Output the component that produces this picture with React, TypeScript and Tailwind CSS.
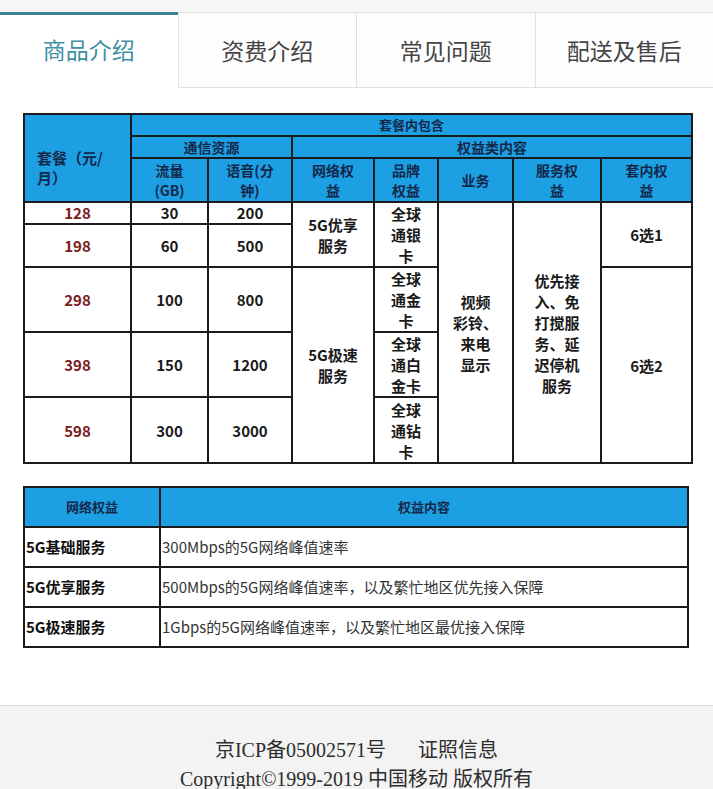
import React from 'react'

const tabs = ['商品介绍', '资费介绍', '常见问题', '配送及售后']

const th = 'bg-[#1d9fe4] border-2 border-[#1b1b1b] text-[#14284a] font-bold text-center align-middle p-0'
const td = 'border-2 border-[#1b1b1b] text-[#1a1a1a] font-bold text-center align-middle p-0'
const price = 'border-2 border-[#1b1b1b] text-[#7a1c1c] font-bold text-center align-middle p-0'

function PlanTable() {
  return (
    <table className="ml-[23px] w-[668px] table-fixed border-collapse border-2 border-[#1b1b1b] text-[15px] leading-[21px]">
      <colgroup>
        <col className="w-[107px]" />
        <col className="w-[77px]" />
        <col className="w-[84px]" />
        <col className="w-[82px]" />
        <col className="w-[64px]" />
        <col className="w-[75px]" />
        <col className="w-[88px]" />
        <col className="w-[91px]" />
      </colgroup>
      <thead className="leading-[20px]">
        <tr className="h-[22px]">
          <th rowSpan={3} className={`${th} !text-left pl-3 pt-5 text-[15px]`}>
            套餐（元/
            <br />
            月）
          </th>
          <th colSpan={7} className={`${th} text-[13px] leading-[18px]`}>套餐内包含</th>
        </tr>
        <tr className="h-[22px]">
          <th colSpan={2} className={`${th} text-[14px] leading-[18px]`}>通信资源</th>
          <th colSpan={5} className={`${th} text-[14px] leading-[18px]`}>权益类内容</th>
        </tr>
        <tr className="h-[44px]">
          <th className={`${th} text-[14px]`}>流量<br />(GB)</th>
          <th className={`${th} text-[14px]`}>语音(分<br />钟)</th>
          <th className={`${th} text-[14px]`}>网络权<br />益</th>
          <th className={`${th} text-[14px]`}>品牌<br />权益</th>
          <th className={`${th} text-[14px]`}>业务</th>
          <th className={`${th} text-[14px]`}>服务权<br />益</th>
          <th className={`${th} text-[14px]`}>套内权<br />益</th>
        </tr>
      </thead>
      <tbody>
        <tr className="h-[22px]">
          <td className={`${price} leading-[18px]`}>128</td>
          <td className={`${td} leading-[18px]`}>30</td>
          <td className={`${td} leading-[18px]`}>200</td>
          <td rowSpan={2} className={td}>5G优享<br />服务</td>
          <td rowSpan={2} className={td}>全球<br />通银<br />卡</td>
          <td rowSpan={5} className={td}>视频<br />彩铃、<br />来电<br />显示</td>
          <td rowSpan={5} className={td}>优先接<br />入、免<br />打搅服<br />务、延<br />迟停机<br />服务</td>
          <td rowSpan={2} className={td}>6选1</td>
        </tr>
        <tr className="h-[42px]">
          <td className={price}>198</td>
          <td className={td}>60</td>
          <td className={td}>500</td>
        </tr>
        <tr className="h-[65px]">
          <td className={price}>298</td>
          <td className={td}>100</td>
          <td className={td}>800</td>
          <td rowSpan={3} className={td}>5G极速<br />服务</td>
          <td className={td}>全球<br />通金<br />卡</td>
          <td rowSpan={3} className={td}>6选2</td>
        </tr>
        <tr className="h-[65px]">
          <td className={price}>398</td>
          <td className={td}>150</td>
          <td className={td}>1200</td>
          <td className={td}>全球<br />通白<br />金卡</td>
        </tr>
        <tr className="h-[66px]">
          <td className={price}>598</td>
          <td className={td}>300</td>
          <td className={td}>3000</td>
          <td className={td}>全球<br />通钻<br />卡</td>
        </tr>
      </tbody>
    </table>
  )
}

const benefits = [
  ['5G基础服务', '300Mbps的5G网络峰值速率'],
  ['5G优享服务', '500Mbps的5G网络峰值速率，以及繁忙地区优先接入保障'],
  ['5G极速服务', '1Gbps的5G网络峰值速率，以及繁忙地区最优接入保障'],
]

function BenefitTable() {
  return (
    <table className="ml-[23px] mt-[22px] w-[666px] table-fixed border-collapse border-2 border-[#1b1b1b] text-[15px]">
      <colgroup>
        <col className="w-[136px]" />
        <col />
      </colgroup>
      <thead>
        <tr className="h-[40px]">
          <th className="border-2 border-[#1b1b1b] bg-[#1d9fe4] text-center align-middle text-[13px] font-bold text-[#14284a]">网络权益</th>
          <th className="border-2 border-[#1b1b1b] bg-[#1d9fe4] text-center align-middle text-[13px] font-bold text-[#14284a]">权益内容</th>
        </tr>
      </thead>
      <tbody>
        {benefits.map(([name, desc]) => (
          <tr key={name} className="h-[40px]">
            <td className="border-2 border-[#1b1b1b] pl-[1px] align-middle font-bold text-[#111]">{name}</td>
            <td className="border-2 border-[#1b1b1b] pl-[1px] align-middle text-[#333]">{desc}</td>
          </tr>
        ))}
      </tbody>
    </table>
  )
}

export default function App() {
  return (
    <div className="w-[713px] min-h-[789px] bg-white font-['Noto_Sans_CJK_SC','Noto_Sans',sans-serif]">
      <div className="bg-[#f6f6f6] pt-[12px]">
        <div className="flex h-[76px]">
          {tabs.map((t, i) => (
            <div
              key={t}
              className={
                i === 0
                  ? 'flex flex-1 items-center justify-center border-t-[3px] border-[#3d7f98] bg-white pb-1 text-[23px] text-[#3f8fa5]'
                  : 'flex flex-1 items-center justify-center border-b border-l border-t border-[#e2e2e2] bg-[#fdfdfd] text-[23px] text-[#454545]'
              }
            >
              {t}
            </div>
          ))}
        </div>
      </div>

      <div className="pt-[25px]">
        <PlanTable />
        <BenefitTable />
      </div>

      <div className="mt-[57px] border-t border-[#dcdcdc] bg-[#f3f3f3] pt-[30px] pb-4 text-center font-['Liberation_Serif','Noto_Sans_CJK_SC',serif] text-[20px] leading-[29px] text-[#2d2d2d]">
        <div>
          京ICP备05002571号<span className="ml-8">证照信息</span>
        </div>
        <div>Copyright©1999-2019 中国移动 版权所有</div>
      </div>
    </div>
  )
}
